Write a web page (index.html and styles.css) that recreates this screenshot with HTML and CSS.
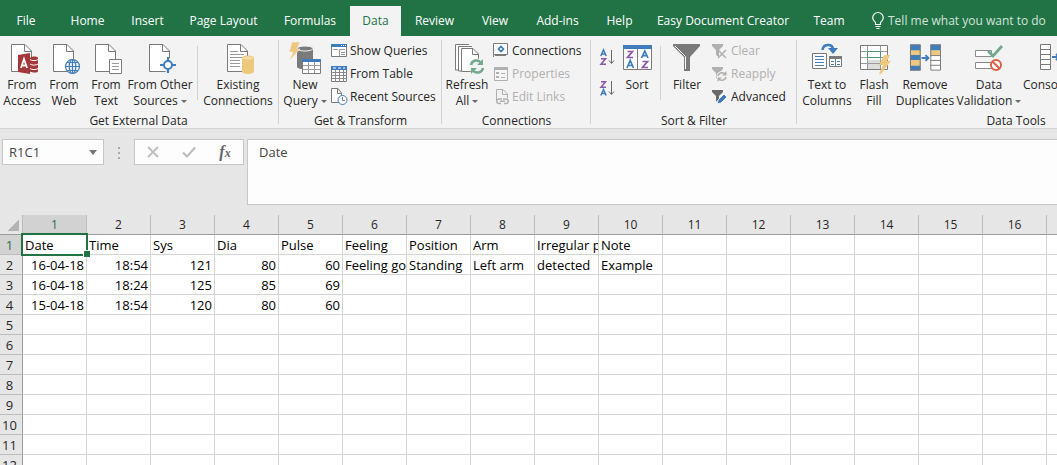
FILE: index.html
```html
<!DOCTYPE html>
<html lang="en">
<head>
<meta charset="utf-8">
<title>Spreadsheet</title>
<link rel="stylesheet" href="styles.css">
</head>
<body>
<svg class="defs" aria-hidden="true">
  <symbol id="doc" viewBox="0 0 32 32"><path d="M5.500 2.500H19L25.500 9V29.500H5.500Z" fill="#fff" stroke="#7a7a7a"/><path d="M18.500 2.500V9.500H25.500" fill="none" stroke="#7a7a7a"/></symbol>
  <symbol id="bolt" viewBox="0 0 12 19"><path d="M5 0H11L8 6H12L2 19H0L4 10H0Z" fill="#edc87e"/></symbol>
  <symbol id="funnel" viewBox="0 0 16 16"><path d="M0 1H11V3L7 7V14L4 12V7L0 3Z"/></symbol>
</svg>

<nav class="tabs" aria-label="Ribbon tabs">
  <button class="tab file">File</button>
  <button class="tab">Home</button>
  <button class="tab">Insert</button>
  <button class="tab">Page Layout</button>
  <button class="tab">Formulas</button>
  <button class="tab active">Data</button>
  <button class="tab">Review</button>
  <button class="tab">View</button>
  <button class="tab">Add-ins</button>
  <button class="tab">Help</button>
  <button class="tab">Easy Document Creator</button>
  <button class="tab">Team</button>
  <button class="tell"><svg width="12" height="18" viewBox="0 0 12 18" fill="none" stroke="#fff" stroke-width="1.200"><path d="M3.500 12.500V10.500C2 9.300 .7 8 .7 5.800A5.300 5.300 0 0 1 11.300 5.800C11.300 8 10 9.300 8.500 10.500V12.500ZM3.500 14.500H8.500M4.500 16.500H7.500"/></svg><span>Tell me what you want to do</span></button>
</nav>

<main class="ribbon">
  <section class="group external">
    <div class="tools">
      <button class="large"><svg class="icon" viewBox="0 0 32 32"><use href="#doc"/><path d="M24 16V29C26 31 32 31 32 29V16C32 14 25 14 24 16Z" fill="#a4373a"/><path d="M24 17.500C26 19 30 19 32 17.500M24 22C26 23.500 30 23.500 32 22M24 26.500C26 28 30 28 32 26.500" stroke="#fff" fill="none"/><path d="M12 13L24 11V32L12 30Z" fill="#a4373a"/><path d="M15 26L18 17L21 26M16 23.500H20" fill="none" stroke="#fff" stroke-width="1.800"/></svg><span>From<br>Access</span></button>
      <button class="large"><svg class="icon" viewBox="0 0 32 32"><use href="#doc"/><g fill="#f3f3f3" stroke="#3f7cbb" stroke-width="1.200"><circle cx="24.500" cy="24.500" r="7"/><ellipse cx="24.500" cy="24.500" rx="3.300" ry="7"/><path d="M24.500 17.500V31.500M17.500 24.500H31.500M19 20.500H30M19 28.500H30"/></g></svg><span>From<br>Web</span></button>
      <button class="large"><svg class="icon" viewBox="0 0 32 32"><use href="#doc"/><path d="M19.500 17.500H31.500V31.500H19.500Z" fill="#fff" stroke="#7a7a7a"/><path d="M22 21.500H29M22 24.500H29M22 27.500H29" stroke="#9a9a9a"/></svg><span>From<br>Text</span></button>
      <button class="large wide"><svg class="icon" viewBox="0 0 32 32"><use href="#doc"/><circle cx="24" cy="23" r="7" fill="#f3f3f3"/><g stroke="#3f7cbb" stroke-width="2"><path d="M24 15V19M24 27V31M16 23H20M28 23H32"/><circle cx="24" cy="23" r="4" fill="#fff"/></g></svg><span>From Other<br>Sources<i class="caret"></i></span></button>
      <span class="divider"></span>
      <button class="large existing"><svg class="icon" viewBox="0 0 32 32"><use href="#doc"/><path d="M8 9.500H16M8 12.500H22M8 15.500H20M8 18.500H18M8 21.500H18M8 24.500H18" stroke="#9a9a9a"/><path d="M20 16V30C21 32.500 31 32.500 32 30V16Z" fill="#edc87e"/><ellipse cx="26" cy="16" rx="6" ry="2" fill="#f4dba8" stroke="#edc87e"/></svg><span>Existing<br>Connections</span></button>
    </div>
    <h2>Get External Data</h2>
  </section>

  <section class="group transform">
    <div class="tools">
      <button class="large"><svg class="icon" viewBox="0 0 32 32"><path d="M8 7V25C9 28 23 28 24 25V7Z" fill="#7a7a7a"/><ellipse cx="16" cy="6.500" rx="8" ry="2.500" fill="#7a7a7a" stroke="#f3f3f3"/><path d="M3 0H11L8 7H11L0 19L4 10H0Z" fill="#edc87e" stroke="#f3f3f3" stroke-width=".6"/><path d="M13.500 17.500H31.500V31.500H13.500Z" fill="#fff" stroke="#7a7a7a"/><path d="M13 17H32V20H13Z" fill="#3f7cbb"/><path d="M14 23.500H31M14 27.500H31M19.500 20V31M25.500 20V31" stroke="#9a9a9a"/></svg><span>New<br>Query<i class="caret"></i></span></button>
      <div class="stack">
        <button class="small"><svg viewBox="0 0 16 16"><path d="M.5 1.500H15.500V13.500H.5Z" fill="#fff" stroke="#7a7a7a"/><path d="M0 1H16V4H0Z" fill="#3f7cbb"/><path d="M10 2.500H11M12 2.500H13M14 2.500H15" stroke="#fff"/><path d="M2 6.500H7M9 6.500H14M8.500 6V13M10 9.500H14M10 11.500H14" stroke="#9a9a9a"/></svg>Show Queries</button>
        <button class="small"><svg viewBox="0 0 16 16"><path d="M.5 .5H15.500V15.500H.5Z" fill="#fff" stroke="#7a7a7a"/><path d="M0 0H16V4H0Z" fill="#3f7cbb"/><path d="M2 2H5M7 2H10M12 2H14" stroke="#fff"/><path d="M0 6.500H16M0 9.500H16M0 12.500H16M4.500 4V16M8.500 4V16M12.500 4V16" stroke="#8a8a8a"/></svg>From Table</button>
        <button class="small"><svg viewBox="0 0 16 16"><path d="M.5 -.5H7L10.500 4V13.500H.5Z" fill="#fff" stroke="#7a7a7a"/><path d="M6.500 0V4.500H10" fill="none" stroke="#7a7a7a"/><circle cx="11.500" cy="11" r="4.500" fill="#fff" stroke="#3f7cbb"/><path d="M11.500 8V11.500H14" fill="none" stroke="#7a7a7a"/></svg>Recent Sources</button>
      </div>
    </div>
    <h2>Get &amp; Transform</h2>
  </section>

  <section class="group connections">
    <div class="tools">
      <button class="large"><svg class="icon" viewBox="0 0 32 32"><g fill="#fff" stroke="#7a7a7a"><path d="M18 2.500H4.500V28H7"/><path d="M21 4.500H7.500V29H10"/><path d="M10.500 6.500H22L27.500 12V29.500H10.500Z"/><path d="M21.500 6.500V12.500H27.500" fill="none"/></g><circle cx="26" cy="24.500" r="8" fill="#f3f3f3"/><g fill="none" stroke="#73aa8d" stroke-width="2.500"><path d="M20 23C21 18 27 17 30 20.500M32 26C31 31 25 32 22 28.500"/></g><path d="M32 17V23H26ZM20 32V26H26Z" fill="#73aa8d"/></svg><span>Refresh<br>All<i class="caret"></i></span></button>
      <div class="stack">
        <button class="small"><svg viewBox="0 0 16 16"><path d="M2 11.500H.5V14" fill="none" stroke="#7a7a7a"/><path d="M.5 .5H14.500V11.500H.5Z" fill="#fff" stroke="#7a7a7a"/><path d="M2 12.500H13" stroke="#7a7a7a"/><path d="M8 3.500L10.500 6L8 8.500L5.500 6Z" fill="#fff" stroke="#3f7cbb" stroke-width="1.700"/></svg>Connections</button>
        <button class="small" disabled><svg viewBox="0 0 16 16"><path d="M1.500 1.500H14.500V14.500H1.500Z" fill="#f6f6f6" stroke="#b0b0b0"/><path d="M1 1H15V4H1Z" fill="#b0b0b0"/><path d="M3 7H6M3 11H6" stroke="#b0b0b0" stroke-width="2"/><path d="M8 7.500H12M8 11.500H12" stroke="#b0b0b0"/></svg>Properties</button>
        <button class="small" disabled><svg viewBox="0 0 16 16" fill="none" stroke="#b0b0b0"><path d="M3.500 12V.5H10L14.500 5V9M9.500 .5V5.500H14.500"/><path d="M9 10H6A2.200 2.200 0 0 0 6 14.500H8M10 10H13A2.200 2.200 0 0 1 13 14.500H11M7 12.300H12" stroke-width="1.500"/></svg>Edit Links</button>
      </div>
    </div>
    <h2>Connections</h2>
  </section>

  <section class="group sorting">
    <div class="tools">
      <div class="order">
        <button aria-label="Sort A to Z"><svg viewBox="0 0 14 18" fill="none"><path d="M.8 7L3.500 .8L6.200 7M2 5H5" stroke="#3f7cbb" stroke-width="1.500"/><path d="M1 9.800H5.500L1 15.200H6" stroke="#8c56a8" stroke-width="1.500"/><path d="M11.500 1V14M9 11.500L11.500 14.500L14 11.500" stroke="#6a6a6a"/></svg></button>
        <button aria-label="Sort Z to A"><svg viewBox="0 0 14 18" fill="none"><path d="M1 1.800H5.500L1 7.200H6" stroke="#8c56a8" stroke-width="1.500"/><path d="M.8 15.500L3.500 9.500L6.200 15.500M2 13.500H5" stroke="#3f7cbb" stroke-width="1.500"/><path d="M11.500 1V14M9 11.500L11.500 14.500L14 11.500" stroke="#6a6a6a"/></svg></button>
      </div>
      <button class="large"><svg class="icon" viewBox="0 0 32 32" fill="none"><path d="M2.500 3.500H30.500V27.500H2.500Z" fill="#fff" stroke="#7a7a7a"/><path d="M2 3H31V7H2Z" fill="#3f7cbb"/><path d="M16.500 7V27" stroke="#7a7a7a"/><g stroke-width="1.700"><path d="M6.500 9.500H11.500L6.500 15.500H12M21.500 19.500H26.500L21.500 25.500H27" stroke="#8c56a8"/><path d="M6 26L9.200 18.500L12.500 26M7.500 23.500H11M20.500 16L23.800 9L27 16M22 13.700H25.500" stroke="#3f7cbb"/></g></svg><span>Sort</span></button>
      <span class="divider"></span>
      <button class="large filter"><svg class="icon" viewBox="0 0 32 32"><path d="M2 2H29V4L19 15V29H13V15L2 4Z" fill="#7a7a7a"/><path d="M4 4L14.500 14.500V27" fill="none" stroke="#fff"/></svg><span>Filter</span></button>
      <div class="stack">
        <button class="small" disabled><svg viewBox="0 0 16 16" fill="#b0b0b0"><use href="#funnel"/><path d="M6 7L14 15M14 7L6 15" stroke="#b0b0b0" stroke-width="1.500"/></svg>Clear</button>
        <button class="small" disabled><svg viewBox="0 0 16 16" fill="#b0b0b0"><use href="#funnel"/><circle cx="10" cy="10.500" r="5.500" fill="#f3f3f3"/><path d="M6 10C7 6 12 6 13 8M14 11C13 15 8 15 7 13" fill="none" stroke="#b0b0b0" stroke-width="1.500"/><path d="M14.500 5V9.500H10ZM5.500 16V11.500H10Z"/></svg>Reapply</button>
        <button class="small"><svg viewBox="0 0 16 16" fill="#6a6a6a"><use href="#funnel"/><path d="M5 15L6 11L12 5L15 8L9 14Z" fill="#3f7cbb" stroke="#f3f3f3"/></svg>Advanced</button>
      </div>
    </div>
    <h2>Sort &amp; Filter</h2>
  </section>

  <section class="group data">
    <div class="tools">
      <button class="large columns"><svg class="icon" viewBox="0 0 32 32"><path d="M1.500 11.500H15.500V26.500H1.500Z" fill="#fff" stroke="#7a7a7a"/><path d="M4 14.500H13M4 17.500H13M4 20.500H13M4 23.500H13" stroke="#3f7cbb"/><path d="M18.500 14.500H30.500V24.500H18.500Z" fill="#fff" stroke="#7a7a7a"/><path d="M18 14H31V17H18ZM24 17H25V25H24Z" fill="#7a7a7a"/><path d="M20 19.500H23M20 22.500H23M26 19.500H29M26 22.500H29" stroke="#3f7cbb"/><path d="M11.500 8C12 2 21 1 22 7" fill="none" stroke="#3f7cbb" stroke-width="2.500"/><path d="M17 6H27L22 12Z" fill="#3f7cbb"/></svg><span>Text to<br>Columns</span></button>
      <button class="large flash"><svg class="icon" viewBox="0 0 32 32"><path d="M2.500 3.500H29.500V27.500H2.500Z" fill="#fff" stroke="#7a7a7a"/><path d="M9 18H22V27H9Z" fill="#ddd"/><path d="M3 9.500H29M3 15.500H29M3 21.500H29M9.500 4V27M22.500 4V27" stroke="#9a9a9a"/><path d="M9.500 9.500H22.500V15.500H9.500Z" fill="#fff" stroke="#4b9670"/><use href="#bolt" x="21" y="13" width="12" height="19"/></svg><span>Flash<br>Fill</span></button>
      <button class="large duplicates"><svg class="icon" viewBox="0 0 33 32"><path d="M1 2H12V29H1Z" fill="#3f7cbb"/><path d="M1 8H12V13H1ZM1 18H12V24H1ZM22 8H33V13H22Z" fill="#edc87e"/><path d="M22 2H33V8H22Z" fill="#3f7cbb"/><path d="M22 13H33V29H22Z" fill="#fff"/><path d="M1.500 2.500H11.500V28.500H1.500ZM22.500 2.500H32.500V28.500H22.500ZM22 13.500H33M22 18.500H33M22 23.500H33" fill="none" stroke="#7a7a7a"/><path d="M13 16H19M17 13L20 16L17 19" fill="none" stroke="#3f7cbb" stroke-width="2"/></svg><span>Remove<br>Duplicates</span></button>
      <button class="large validation"><svg class="icon" viewBox="0 0 32 32"><path d="M2.500 8.500H18.500V14.500H2.500ZM2.500 20.500H18.500V26.500H2.500Z" fill="#fff" stroke="#8a8a8a"/><path d="M15 9L20 14L29 4" fill="none" stroke="#73aa8d" stroke-width="2.800"/><circle cx="23" cy="23" r="5" fill="#fff" stroke="#dc5e43" stroke-width="2"/><path d="M19.500 19.500L26.500 26.500" stroke="#dc5e43" stroke-width="2"/></svg><span>Data<br>Validation<i class="caret"></i></span></button>
      <button class="large consolidate"><svg class="icon" viewBox="0 0 32 32"><path d="M.5 2.500H10.500V27.500H.5ZM0 7.500H11M0 12.500H11M0 17.500H11M0 22.500H11" fill="#fff" stroke="#7a7a7a"/><path d="M12 15H18M16 12L19 15L16 18" fill="none" stroke="#3f7cbb" stroke-width="2"/><path d="M21.500 10.500H31.500V20.500H21.500Z" fill="#fff" stroke="#7a7a7a"/></svg><span>Consolidate</span></button>
    </div>
    <h2>Data Tools</h2>
  </section>
</main>

<section class="formula-bar">
  <div class="name-box">
    <input type="text" value="R1C1" aria-label="Name box">
    <button aria-label="Show names"><i class="caret"></i></button>
  </div>
  <span class="grip"><i></i><i></i><i></i></span>
  <div class="entry">
    <button aria-label="Cancel"><svg width="14" height="14" viewBox="0 0 14 14"><path d="M2 2L12 12M12 2L2 12" stroke="#bdbdbd" stroke-width="1.800"/></svg></button>
    <button aria-label="Enter"><svg width="14" height="14" viewBox="0 0 14 14"><path d="M1 7.500L5 11.500L13 2.500" fill="none" stroke="#bdbdbd" stroke-width="2.200"/></svg></button>
    <button class="fx" aria-label="Insert function">f<sub>x</sub></button>
  </div>
  <textarea aria-label="Formula bar">Date</textarea>
</section>

<div class="sheet">
<table>
  <colgroup><col class="row-head"><col span="17"></colgroup>
  <thead>
    <tr><th class="corner" aria-label="Select all"></th><th class="current">1</th><th>2</th><th>3</th><th>4</th><th>5</th><th>6</th><th>7</th><th>8</th><th>9</th><th>10</th><th>11</th><th>12</th><th>13</th><th>14</th><th>15</th><th>16</th><th></th></tr>
  </thead>
  <tbody>
    <tr><th class="current">1</th><td class="selected">Date</td><td>Time</td><td>Sys</td><td>Dia</td><td>Pulse</td><td>Feeling</td><td>Position</td><td>Arm</td><td>Irregular pulse</td><td>Note</td><td></td><td></td><td></td><td></td><td></td><td></td><td></td></tr>
    <tr><th>2</th><td class="num">16-04-18</td><td class="num">18:54</td><td class="num">121</td><td class="num">80</td><td class="num">60</td><td>Feeling good</td><td>Standing</td><td>Left arm</td><td>detected</td><td>Example</td><td></td><td></td><td></td><td></td><td></td><td></td><td></td></tr>
    <tr><th>3</th><td class="num">16-04-18</td><td class="num">18:24</td><td class="num">125</td><td class="num">85</td><td class="num">69</td><td></td><td></td><td></td><td></td><td></td><td></td><td></td><td></td><td></td><td></td><td></td><td></td></tr>
    <tr><th>4</th><td class="num">15-04-18</td><td class="num">18:54</td><td class="num">120</td><td class="num">80</td><td class="num">60</td><td></td><td></td><td></td><td></td><td></td><td></td><td></td><td></td><td></td><td></td><td></td><td></td></tr>
    <tr><th>5</th><td></td><td></td><td></td><td></td><td></td><td></td><td></td><td></td><td></td><td></td><td></td><td></td><td></td><td></td><td></td><td></td><td></td></tr>
    <tr><th>6</th><td></td><td></td><td></td><td></td><td></td><td></td><td></td><td></td><td></td><td></td><td></td><td></td><td></td><td></td><td></td><td></td><td></td></tr>
    <tr><th>7</th><td></td><td></td><td></td><td></td><td></td><td></td><td></td><td></td><td></td><td></td><td></td><td></td><td></td><td></td><td></td><td></td><td></td></tr>
    <tr><th>8</th><td></td><td></td><td></td><td></td><td></td><td></td><td></td><td></td><td></td><td></td><td></td><td></td><td></td><td></td><td></td><td></td><td></td></tr>
    <tr><th>9</th><td></td><td></td><td></td><td></td><td></td><td></td><td></td><td></td><td></td><td></td><td></td><td></td><td></td><td></td><td></td><td></td><td></td></tr>
    <tr><th>10</th><td></td><td></td><td></td><td></td><td></td><td></td><td></td><td></td><td></td><td></td><td></td><td></td><td></td><td></td><td></td><td></td><td></td></tr>
    <tr><th>11</th><td></td><td></td><td></td><td></td><td></td><td></td><td></td><td></td><td></td><td></td><td></td><td></td><td></td><td></td><td></td><td></td><td></td></tr>
    <tr><th>12</th><td></td><td></td><td></td><td></td><td></td><td></td><td></td><td></td><td></td><td></td><td></td><td></td><td></td><td></td><td></td><td></td><td></td></tr>
  </tbody>
</table>
</div>
</body>
</html>
```
FILE: styles.css
```css
* { box-sizing: border-box; }

body {
  margin: 0;
  height: 100vh;
  display: flex;
  flex-direction: column;
  overflow: hidden;
  background: #e6e6e6;
  color: #262626;
  font: 12px/16px "Open Sans", "Noto Sans", sans-serif;
}

button, input, textarea {
  margin: 0;
  padding: 0;
  border: 0;
  background: none;
  color: inherit;
  font: inherit;
}

button { white-space: nowrap; }
svg { flex: none; overflow: visible; }
.defs { position: absolute; width: 0; height: 0; }

/* Tabs */
.tabs {
  flex: none;
  display: grid;
  grid-template-columns: 57px 61px 59px 93px 80px 51px 67px 54px 71px 53px 154px 58px 1fr;
  padding-top: 6px;
  background: #217346;
  color: #fff;
}
.tab { height: 30px; }
.tab.file { padding-right: 5px; }
.tab.active { background: #f3f3f3; color: #217346; }
.tell {
  display: flex;
  align-items: center;
  gap: 4px;
  padding-left: 14px;
  color: #d3e3da;
}

/* Ribbon */
.ribbon {
  flex: none;
  display: flex;
  overflow: hidden;
  background: #f3f3f3;
  border-bottom: 1px solid #d2d2d2;
}
.group {
  flex: none;
  position: relative;
  display: flex;
  flex-direction: column;
}
.group::after {
  content: "";
  position: absolute;
  top: 4px;
  right: 0;
  bottom: 4px;
  width: 1px;
  background: #d2d2d2;
}
.group h2 {
  margin: 0;
  font-size: 12px;
  line-height: 15px;
  font-weight: 400;
  text-align: center;
}
.external h2 { padding-right: 3px; }
.tools { display: flex; height: 77px; }
.external { width: 279px; padding-left: 1px; }
.transform { width: 163px; }
.connections { width: 149px; }
.sorting { width: 206px; }
.data { width: 438px; }

.large {
  display: flex;
  flex-direction: column;
  align-items: center;
  gap: 3px;
  width: 42px;
  padding-top: 6px;
}
.large.wide { width: 66px; }
.large.existing { width: 68px; margin-left: 6px; }
.icon { width: 32px; height: 32px; }
.transform .large { width: 40px; margin-left: 6px; }
.connections .large { width: 40px; margin-left: 5px; }
.sorting .large { width: 38px; }
.sorting .filter { width: 40px; margin-left: 6px; }
.data .columns { width: 52px; margin-left: 4px; }
.data .flash { width: 42px; }
.data .duplicates { width: 60px; }
.data .validation { width: 68px; }
.data .consolidate { width: 66px; }

.divider {
  width: 1px;
  height: 54px;
  margin: 10px 0 0 4px;
  background: #d2d2d2;
}
.caret {
  display: inline-block;
  margin-left: 3px;
  border: 3px solid transparent;
  border-top-color: #6a6a6a;
  border-bottom-width: 0;
  vertical-align: middle;
}
.stack { padding: 3px 0 0 6px; }
.sorting .stack { padding-left: 5px; }
.small {
  display: flex;
  align-items: center;
  gap: 3px;
  height: 23px;
}
.small svg { width: 16px; height: 16px; }
.small:disabled { color: #b0b0b0; }
.order {
  display: flex;
  flex-direction: column;
  gap: 13px;
  padding: 13px 4px 0 9px;
}
.order button { height: 18px; }
.order svg { display: block; width: 14px; height: 18px; }

/* Formula bar */
.formula-bar {
  flex: none;
  display: flex;
  align-items: flex-start;
  padding-top: 10px;
  color: #444;
}
.name-box, .entry {
  display: flex;
  height: 26px;
  border: 1px solid #c6c6c6;
  background: #fdfdfd;
}
.name-box { width: 102px; margin-left: 2px; }
.name-box input { flex: 1; min-width: 0; padding-left: 6px; }
.name-box button { width: 20px; }
.name-box .caret { margin: 0; border-width: 5px 4px 0; border-top-color: #777; }
.grip {
  display: flex;
  flex-direction: column;
  gap: 3px;
  width: 30px;
  padding: 8px 0 0 14px;
}
.grip i { width: 2px; height: 2px; background: #aaa; }
.entry { width: 110px; }
.entry button { flex: 1; display: grid; place-content: center; }
.entry .fx {
  display: block;
  color: #666;
  font: italic bold 16px/22px "Liberation Serif", serif;
}
.entry sub { font-size: 12px; line-height: 1px; vertical-align: baseline; }
textarea {
  flex: 1;
  height: 66px;
  margin-left: 3px;
  padding: 4px 11px;
  border: 1px solid #c6c6c6;
  border-right: 0;
  background: #fdfdfd;
  resize: none;
}
.name-box input, textarea { font-size: 13px; }

/* Sheet */
.sheet {
  flex: 1;
  min-height: 0;
  margin-top: 10px;
  overflow: hidden;
}
table {
  width: 1111px;
  table-layout: fixed;
  border-spacing: 0;
  background: #fff;
  color: #000;
  font-size: 13px;
  line-height: 18px;
}
col { width: 64px; }
.row-head { width: 23px; }
th, td {
  height: 20px;
  padding: 0 2px;
  overflow: hidden;
  border-right: 1px solid #d4d4d4;
  border-bottom: 1px solid #d4d4d4;
  text-align: left;
  white-space: nowrap;
}
th {
  padding: 0;
  background: #e6e6e6;
  border-color: #bdbdbd;
  color: #262626;
  font-weight: 400;
  text-align: center;
}
tbody th { padding-right: 3px; border-right-color: #9b9b9b; }
thead th { font-size: 12px; border-bottom-color: #9b9b9b; }
th.current { background: #d2d2d2; color: #217346; }
thead th.current { border-bottom-color: #217346; }
.corner { background: linear-gradient(135deg, transparent 50%, #b4b4b4 50%) 8px 4px / 11px 12px no-repeat #e6e6e6; }
.num { text-align: right; }
.selected { position: relative; overflow: visible; }
.selected::before {
  content: "";
  position: absolute;
  inset: -2px;
  border: 2px solid #217346;
}
.selected::after {
  content: "";
  position: absolute;
  right: -4px;
  bottom: -3px;
  width: 6px;
  height: 6px;
  border: 1px solid #fff;
  border-width: 1px 0 0 1px;
  background: #217346;
}
```
